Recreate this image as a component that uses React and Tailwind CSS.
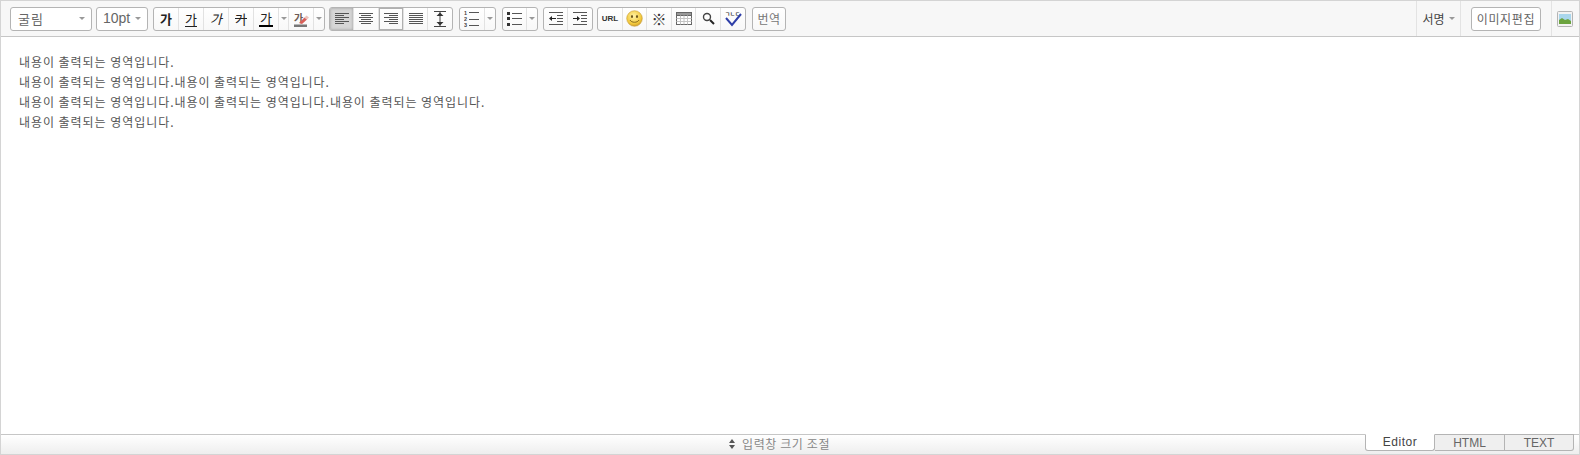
import React from 'react';

const kr = "font-['Noto_Sans_CJK_KR','Noto_Sans',sans-serif]";

const Caret = ({ className = '' }) => (
  <span className={`inline-block w-0 h-0 border-x-[3px] border-x-transparent border-t-[3px] border-t-[#999] ${className}`} />
);

const Arrow = () => (
  <div className="w-[10px] h-full flex items-center justify-center">
    <Caret />
  </div>
);

// toolbar button cell
const Cell = ({ children, active, outlined, w = 'w-[25px]' }) => (
  <div
    className={`${w} h-full flex items-center justify-center border-r border-[#e2e2e2] last:border-r-0 ${
      active ? 'bg-[#d6d6d6] shadow-[inset_0_0_3px_#999]' : ''
    } ${outlined ? 'shadow-[inset_0_0_0_1px_#b0b0b0]' : ''}`}
  >
    {children}
  </div>
);

const Group = ({ children, className = '' }) => (
  <div className={`h-[24px] flex bg-gradient-to-b from-white to-[#f8f8f8] border border-[#b4b4b4] rounded-[3px] overflow-hidden ${className}`}>
    {children}
  </div>
);

// align icon made of horizontal lines
const Lines = ({ rows, color = '#555' }) => (
  <svg width="16" height="14" viewBox="0 0 16 14">
    {rows.map(([x1, x2], i) => (
      <line key={i} x1={x1} x2={x2} y1={1.5 + i * 2} y2={1.5 + i * 2} stroke={color} strokeWidth="1" />
    ))}
  </svg>
);

const Ga = ({ className = '', children = '가' }) => (
  <span className={`${kr} text-[13px] leading-none text-[#222] ${className}`}>{children}</span>
);

const OrderedIcon = () => (
  <svg width="16" height="18" viewBox="0 0 16 18">
    <text x="0" y="5" fontSize="5.500" fontWeight="700" fontFamily="Liberation Sans" fill="#444">1</text>
    <text x="0" y="11" fontSize="5.500" fontWeight="700" fontFamily="Liberation Sans" fill="#444">2</text>
    <text x="0" y="17" fontSize="5.500" fontWeight="700" fontFamily="Liberation Sans" fill="#444">3</text>
    <path d="M5 2.500h10M5 9.500h10M5 15.500h10" stroke="#555" />
  </svg>
);

const BulletIcon = () => (
  <svg width="15" height="15" viewBox="0 0 15 15">
    <path d="M0 1h3v3H0zM0 6h3v3H0zM0 12h3v3H0z" fill="#333" />
    <path d="M5 2.500h10M5 7.500h10M5 13.500h10" stroke="#555" />
  </svg>
);

const OutdentIcon = () => (
  <svg width="16" height="14" viewBox="0 0 16 14">
    <path d="M1 .5h14M9 3.500h6M9 6.500h6M9 9.500h6M1 12.500h14" stroke="#555" />
    <path d="M3 6.500h5" stroke="#222" />
    <path d="M4 4v5L1 6.500z" fill="#222" />
  </svg>
);

const IndentIcon = () => (
  <svg width="16" height="14" viewBox="0 0 16 14">
    <path d="M1 .5h14M9 3.500h6M9 6.500h6M9 9.500h6M1 12.500h14" stroke="#555" />
    <path d="M1 6.500h5" stroke="#222" />
    <path d="M5 4v5l3-2.500z" fill="#222" />
  </svg>
);

const LineHeightIcon = () => (
  <svg width="14" height="16" viewBox="0 0 14 16">
    <path d="M1 .5h12M1 15.500h12M7 1v14" stroke="#444" />
    <path d="M3.500 5 7 1.500 10.500 5zM3.500 11 7 14.500 10.500 11z" fill="#333" />
  </svg>
);

const ColorBgIcon = () => (
  <svg width="18" height="18" viewBox="0 0 18 18">
    <rect x="2" y="14.500" width="13" height="2.500" fill="#777" />
    <text x="2" y="12" fontSize="10" fontWeight="700" fontFamily="Noto Sans CJK KR" fill="#6d5a54">가</text>
    <path d="M7 13 12.500 7.500l2.500 2L10 14z" fill="#d9605a" />
    <path d="M12.500 7.500 14.500 5.500l2.500 2-2 2z" fill="#ecc3bb" />
  </svg>
);

const Smiley = () => (
  <svg width="17" height="17" viewBox="0 0 17 17">
    <defs>
      <radialGradient id="face" cx="45%" cy="35%" r="70%">
        <stop offset="0%" stopColor="#fff3a8" />
        <stop offset="70%" stopColor="#f2c83a" />
        <stop offset="100%" stopColor="#c4912a" />
      </radialGradient>
    </defs>
    <circle cx="8.500" cy="8.500" r="7.800" fill="url(#face)" stroke="#c9a03a" strokeWidth="0.600" />
    <ellipse cx="6" cy="6.500" rx="1" ry="1.500" fill="#6a5218" />
    <ellipse cx="11" cy="6.500" rx="1" ry="1.500" fill="#6a5218" />
    <path d="M4 10c1.500 3 7.500 3 9 0" fill="none" stroke="#8a6a1c" strokeWidth="1" />
  </svg>
);

const TableIcon = () => (
  <svg width="16" height="13" viewBox="0 0 16 13">
    <rect x="0.500" y="0.500" width="15" height="12" fill="#fff" stroke="#666" />
    <rect x="0.500" y="0.500" width="15" height="3" fill="#999" stroke="#666" />
    <path d="M4.500 3.500v9M8 3.500v9M11.500 3.500v9M.5 6.500h15M.5 9.500h15" stroke="#c4c4c4" />
  </svg>
);

const SearchIcon = () => (
  <svg width="13" height="13" viewBox="0 0 13 13">
    <circle cx="5" cy="5" r="3.500" fill="#fff" stroke="#444" strokeWidth="1.400" />
    <path d="M8 8l4 4" stroke="#222" strokeWidth="2" />
  </svg>
);

const SpellIcon = () => (
  <svg width="18" height="17" viewBox="0 0 18 17">
    <text x="1" y="6" fontSize="5.500" fontWeight="700" fontFamily="Noto Sans CJK KR" fill="#333">ㄱㄴㄷ</text>
    <path d="M2 8 8 15 17 4" fill="none" stroke="#2f3fa8" strokeWidth="2" />
  </svg>
);

const PictureIcon = () => (
  <svg width="16" height="16" viewBox="0 0 16 16">
    <rect x="0.500" y="0.500" width="15" height="15" rx="1" fill="#f2f2f2" stroke="#b4b4b4" />
    <rect x="2" y="3" width="12" height="10" fill="#a9d6ec" />
    <path d="M2 13V9l3-2 3 2 3-1 3 2v3z" fill="#6ba33e" />
  </svg>
);

const EDITOR_TEXT = '내용이 출력되는 영역입니다.';
const lines = [1, 2, 3, 1];

export default function App() {
  return (
    <div className={`w-[1580px] h-[455px] bg-white border border-[#d4d4d4] flex flex-col ${kr}`}>
      {/* toolbar */}
      <div className="h-[36px] shrink-0 bg-[#f7f7f7] border-b border-[#c6c6c6] flex items-center pl-[9px] pr-[5px]">
        <div className="w-[82px] h-[24px] bg-white border border-[#b4b4b4] rounded-[3px] flex items-center justify-between pl-[7px] pr-[6px] text-[13px] tracking-[1px] text-[#666]">
          <span>굴림</span>
          <Caret />
        </div>
        <div className="ml-[4px] w-[52px] h-[24px] bg-white border border-[#b4b4b4] rounded-[3px] flex items-center justify-between pl-[6px] pr-[6px] text-[14px] text-[#666] font-['Liberation_Sans',sans-serif]">
          <span>10pt</span>
          <Caret />
        </div>

        <Group className="ml-[5px]">
          <Cell><Ga className="font-bold">가</Ga></Cell>
          <Cell><Ga className="underline underline-offset-2">가</Ga></Cell>
          <Cell><Ga className="italic">가</Ga></Cell>
          <Cell><Ga className="line-through">가</Ga></Cell>
          <Cell>
            <span className="flex flex-col items-center">
              <Ga>가</Ga>
              <span className="w-[14px] h-[2px] bg-black mt-[1px]" />
            </span>
          </Cell>
          <Cell w="w-[10px]"><Caret /></Cell>
          <Cell><ColorBgIcon /></Cell>
          <Arrow />
        </Group>

        <Group className="ml-[4px]">
          <Cell w="w-[24px]" active><Lines rows={[[1, 15], [1, 10], [1, 15], [1, 10], [1, 15], [1, 10]]} /></Cell>
          <Cell><Lines rows={[[1, 15], [3, 13], [1, 15], [3, 13], [1, 15], [3, 13]]} /></Cell>
          <Cell outlined><Lines rows={[[1, 15], [6, 15], [1, 15], [6, 15], [1, 15], [6, 15]]} /></Cell>
          <Cell w="w-[24px]"><Lines rows={[[1, 15], [1, 15], [1, 15], [1, 15], [1, 15], [1, 15]]} /></Cell>
          <Cell w="w-[24px]"><LineHeightIcon /></Cell>
        </Group>

        <Group className="ml-[6px]">
          <Cell><OrderedIcon /></Cell>
          <Arrow />
        </Group>
        <Group className="ml-[6px]">
          <Cell w="w-[24px]"><BulletIcon /></Cell>
          <Arrow />
        </Group>

        <Group className="ml-[5px]">
          <Cell w="w-[24px]"><OutdentIcon /></Cell>
          <Cell w="w-[24px]"><IndentIcon /></Cell>
        </Group>

        <Group className="ml-[4px]">
          <Cell>
            <span className="text-[8px] font-bold text-[#333] font-['Liberation_Sans',sans-serif]">URL</span>
          </Cell>
          <Cell w="w-[24px]"><Smiley /></Cell>
          <Cell><span className="text-[15px] leading-none text-[#333]">※</span></Cell>
          <Cell w="w-[24px]"><TableIcon /></Cell>
          <Cell><SearchIcon /></Cell>
          <Cell w="w-[24px]"><SpellIcon /></Cell>
        </Group>

        <Group className="ml-[6px]">
          <div className="w-[32px] flex items-center justify-center text-[12px] tracking-[0.5px] text-[#777]">번역</div>
        </Group>

        {/* right side */}
        <div className="ml-auto h-full flex items-center">
          <div className="h-full w-[44px] border-l border-[#e3e3e3] flex items-center justify-center gap-[4px] text-[12px] text-[#444]">
            <span>서명</span>
            <Caret className="border-t-[#666]" />
          </div>
          <div className="h-full pl-[10px] pr-[10px] border-l border-[#e3e3e3] flex items-center">
            <div className="w-[70px] h-[24px] bg-white border border-[#b4b4b4] rounded-[3px] flex items-center justify-center text-[12px] tracking-[0.7px] text-[#666]">
              이미지편집
            </div>
          </div>
          <div className="h-full pl-[5px] pr-[1px] border-l border-[#e3e3e3] flex items-center">
            <PictureIcon />
          </div>
        </div>
      </div>

      {/* content */}
      <div className="flex-1 pt-[15px] pl-[18px] text-[12px] leading-[20px] tracking-[0.95px] text-[#555]">
        {lines.map((n, i) => (
          <p key={i}>{EDITOR_TEXT.repeat(n)}</p>
        ))}
      </div>

      {/* footer */}
      <div className="h-[20px] shrink-0 bg-gradient-to-b from-white to-[#eeeeee] border-t border-[#c6c6c6] flex items-start pl-[728px] pr-[5px]">
        <div className="h-full -mt-[1px] flex items-center gap-[7px] text-[12px] tracking-[0.6px] text-[#888]">
          <span className="flex flex-col gap-[2px]">
            <span className="w-0 h-0 border-x-[3px] border-x-transparent border-b-[4px] border-b-[#555]" />
            <span className="w-0 h-0 border-x-[3px] border-x-transparent border-t-[4px] border-t-[#555]" />
          </span>
          <span>입력창 크기 조절</span>
        </div>
        <div className="ml-auto flex text-[12px] text-[#666] font-['Liberation_Sans',sans-serif] -mt-[1px]">
          <div className="w-[70px] h-[17px] bg-white border border-t-white border-[#b4b4b4] rounded-b-[3px] flex items-center justify-center tracking-[0.5px] text-[#444] pb-[2px]">Editor</div>
          <div className="w-[70px] h-[17px] bg-[#efefef] border border-l-0 border-[#b4b4b4] flex items-center justify-center">HTML</div>
          <div className="w-[69px] h-[17px] bg-[#efefef] border border-l-0 border-[#b4b4b4] rounded-br-[3px] flex items-center justify-center">TEXT</div>
        </div>
      </div>
    </div>
  );
}
